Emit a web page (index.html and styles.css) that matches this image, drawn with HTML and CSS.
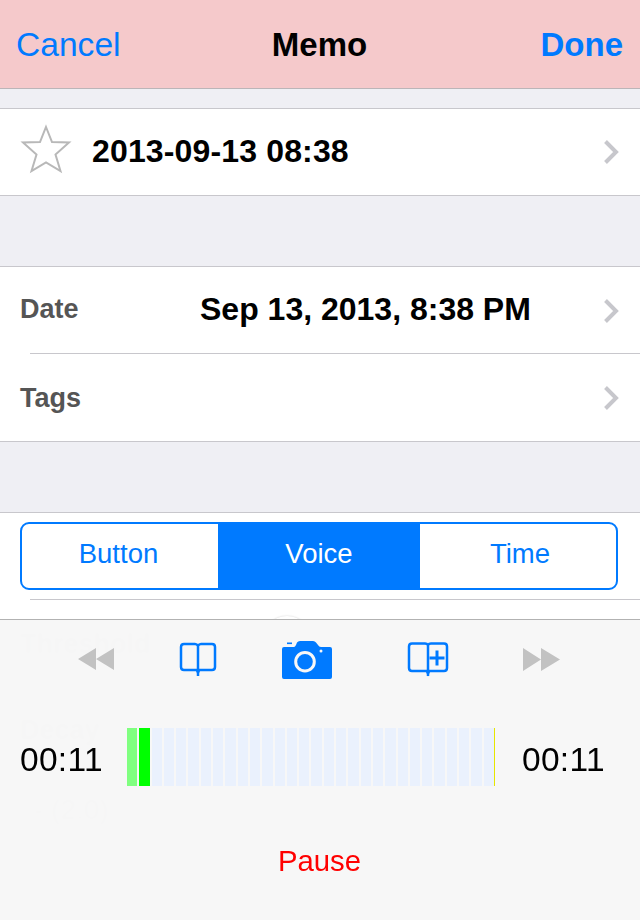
FILE: index.html
```html
<!DOCTYPE html>
<html lang="en">
<head>
  <meta charset="UTF-8">
  <title>Memo</title>
  <link rel="stylesheet" href="styles.css">
</head>
<body>
  <div class="screen">
    <header class="navbar">
      <span class="nav-btn nav-cancel">Cancel</span>
      <span class="nav-title">Memo</span>
      <span class="nav-btn nav-done">Done</span>
    </header>

    <section class="group group-first">
      <div class="row row-memo">
        <svg class="star" width="52" height="56" viewBox="0 0 52 56">
          <path d="M26 3 L32 18 L49 18.500 L35.500 30.500 L40.500 47 L26 38.500 L11.500 47 L16.500 30.500 L3 18.500 L20 18 Z" fill="none" stroke="#b8b8b8" stroke-width="2"/>
        </svg>
        <span class="memo-name">2013-09-13 08:38</span>
        <svg class="chevron" width="18" height="26" viewBox="0 0 18 26"><path d="M3.500 2.500 L14 13 L3.500 23.500" fill="none" stroke="#c7c7cc" stroke-width="4"/></svg>
      </div>
    </section>

    <section class="group">
      <div class="row row-field row-date">
        <span class="label">Date</span>
        <span class="value">Sep 13, 2013, 8:38 PM</span>
        <svg class="chevron" width="18" height="26" viewBox="0 0 18 26"><path d="M3.500 2.500 L14 13 L3.500 23.500" fill="none" stroke="#c7c7cc" stroke-width="4"/></svg>
      </div>
      <div class="row row-field row-inset">
        <span class="label">Tags</span>
        <span class="value"></span>
        <svg class="chevron" width="18" height="26" viewBox="0 0 18 26"><path d="M3.500 2.500 L14 13 L3.500 23.500" fill="none" stroke="#c7c7cc" stroke-width="4"/></svg>
      </div>
    </section>

    <section class="group group-last">
      <div class="row-segment">
        <div class="segments">
          <span class="seg seg-first">Button</span>
          <span class="seg seg-on">Voice</span>
          <span class="seg seg-last">Time</span>
        </div>
      </div>
      <div class="row-under">
        <div class="under-line"></div>
        <span class="under-knob"></span>
        <span class="under-label under-threshold">Threshold</span>
        <span class="under-label under-decay">Decay</span>
        <span class="under-value">- (2.0)</span>
      </div>
    </section>

    <div class="panel">
      <div class="tools">
        <svg width="38" height="24" viewBox="0 0 38 24"><path d="M19 0 V22 L1 11 Z M37 0 V22 L19 11 Z" fill="#c2c2c2"/></svg>
        <svg width="38" height="36" viewBox="0 0 38 36">
          <path d="M19 4 V34 M19 28 H5 Q2 28 2 25 V5 Q2 2 5 2 H16 Q18 2 19 4 Q20 2 22 2 H33 Q36 2 36 5 V25 Q36 28 33 28 H19" fill="none" stroke="#007aff" stroke-width="2.500"/>
          <path d="M16.500 28 H21.500 L19 33.500 Z" fill="#007aff"/>
        </svg>
        <svg width="52" height="40" viewBox="0 0 52 40">
          <path d="M1 9 Q1 7 3 7 H13 Q14 7 15 5 L16 2.500 Q17 1 19 1 H32 Q34 1 35 2.500 L37 5 Q38 7 40 7 H49 Q51 7 51 9 V37 Q51 39 49 39 H3 Q1 39 1 37 Z" fill="#007aff"/>
          <rect x="6" y="2.500" width="5" height="1.600" fill="#007aff"/>
          <circle cx="24" cy="21.700" r="9.300" fill="none" stroke="#f7f7f7" stroke-width="3"/>
          <circle cx="40" cy="11" r="1.500" fill="#f7f7f7"/>
        </svg>
        <svg class="tool-add" width="42" height="36" viewBox="0 0 42 36">
          <path d="M21 3 V34 M21 29 H5 Q2 29 2 26 V4.500 Q2 1.500 5 1.500 H18 Q20 1.500 21 3 Q22 1.500 24 1.500 H37 Q40 1.500 40 4.500 V26 Q40 29 37 29 H21" fill="none" stroke="#007aff" stroke-width="2.500"/>
          <path d="M18.500 29 H23.500 L21 34.500 Z" fill="#007aff"/>
          <path d="M30 8.500 V23.500 M22.500 16 H37.500" fill="none" stroke="#007aff" stroke-width="3"/>
        </svg>
        <svg class="tool-next" width="38" height="24" viewBox="0 0 38 24"><path d="M1 0 V23 L19 11.500 Z M19 0 V23 L38 11.500 Z" fill="#c2c2c2"/></svg>
      </div>

      <div class="meter-row">
        <span class="time time-left">00:11</span>
        <div class="meter">
          <i class="bar bar-peak"></i><i class="bar bar-level"></i>
          <i class="bar"></i><i class="bar"></i><i class="bar"></i><i class="bar"></i><i class="bar"></i>
          <i class="bar"></i><i class="bar"></i><i class="bar"></i><i class="bar"></i><i class="bar"></i>
          <i class="bar"></i><i class="bar"></i><i class="bar"></i><i class="bar"></i><i class="bar"></i>
          <i class="bar"></i><i class="bar"></i><i class="bar"></i><i class="bar"></i><i class="bar"></i>
          <i class="bar"></i><i class="bar"></i><i class="bar"></i><i class="bar"></i><i class="bar"></i>
          <i class="bar"></i><i class="bar"></i><i class="bar bar-end"></i>
        </div>
        <span class="time time-right">00:11</span>
      </div>

      <div class="pause">Pause</div>
    </div>
  </div>
</body>
</html>
```

FILE: styles.css
```css
* {
  box-sizing: border-box;
}

html, body {
  margin: 0;
  height: 100%;
}

body {
  font-family: "Liberation Sans", Arial, sans-serif;
  background-color: #efeff4;
  color: black;
  overflow: hidden;
}

.screen {
  position: relative;
  height: 920px;
  overflow: hidden;
}

/* Barra superior */
.navbar {
  height: 89px;
  padding: 2px 17px 0;
  display: flex;
  align-items: center;
  justify-content: space-between;
  background-color: #f5c9cb;
  border-bottom: 1px solid #bbb5b8;
}

.nav-btn {
  width: 120px;
  font-size: 33px;
  color: #007aff;
}

.nav-cancel {
  margin-left: -1px;
  font-size: 33.6px;
}

.nav-done {
  font-weight: bold;
  text-align: right;
}

.nav-title {
  font-size: 33px;
  font-weight: bold;
}

/* Grupos de filas */
.group {
  margin-top: 70px;
  background-color: white;
  border-top: 1px solid #c8c7cc;
  border-bottom: 1px solid #c8c7cc;
}

.group-first {
  margin-top: 19px;
}

.group-last {
  border-bottom: 0;
  height: 420px;
}

.row {
  display: flex;
  align-items: center;
}

.row-memo {
  height: 86px;
  padding: 0 20px;
}

.star {
  flex: none;
}

.memo-name {
  flex: 1;
  margin-left: 20px;
  padding-bottom: 2px;
  font-size: 32px;
  font-weight: bold;
  letter-spacing: 0.15px;
}

.row-field {
  position: relative;
  height: 87px;
  padding: 0 20px;
}

.row-date .label,
.row-date .value {
  padding-bottom: 2px;
}

.row-inset .label {
  padding-top: 2px;
}

.row-inset::before {
  content: "";
  position: absolute;
  top: -1px;
  left: 30px;
  right: 0;
  border-top: 1px solid #c8c7cc;
}

.label {
  width: 180px;
  font-size: 27px;
  font-weight: bold;
  color: #555555;
}

.value {
  flex: 1;
  font-size: 32px;
  font-weight: bold;
}

.chevron {
  flex: none;
}

/* Control segmentado */
.row-segment {
  padding: 9px 22px 0 20px;
}

.segments {
  display: flex;
  height: 68px;
  border: 2px solid #007aff;
  border-radius: 9px;
  overflow: hidden;
}

.seg {
  flex: 1;
  display: flex;
  align-items: center;
  justify-content: center;
  padding-bottom: 4px;
  font-size: 27.5px;
  color: #007aff;
}

.seg-first {
  flex: none;
  width: 196px;
  padding-right: 3px;
}

.seg-on {
  flex: none;
  width: 202px;
  background-color: #007aff;
  color: white;
}

.seg-last {
  padding-left: 4px;
}

/* Lo que queda debajo del panel */
.row-under {
  position: relative;
  padding-top: 9px;
}

.under-line {
  margin-left: 30px;
  border-top: 1px solid #c8c7cc;
}

.under-knob {
  position: absolute;
  left: 263px;
  top: 26px;
  width: 48px;
  height: 48px;
  border-radius: 50%;
  background-color: white;
  box-shadow: 0 0 2px rgba(0, 0, 0, 0.18);
}

.under-label {
  position: absolute;
  left: 20px;
  font-size: 27px;
  font-weight: bold;
  color: #bbbbbb;
}

.under-threshold {
  top: 39px;
}

.under-decay {
  top: 125px;
}

.under-value {
  position: absolute;
  left: 34px;
  top: 204px;
  font-size: 28px;
  color: #bbbbbb;
}

/* Panel translucido del grabador */
.panel {
  position: absolute;
  left: 0;
  right: 0;
  bottom: 0;
  height: 301px;
  background-color: rgba(247, 247, 247, 0.975);
  backdrop-filter: blur(1px);
  border-top: 1px solid #b2b2b2;
}

.tools {
  height: 79px;
  padding-left: 77px;
  display: flex;
  align-items: center;
  gap: 64px;
}

.tool-add {
  margin-left: 10px;
}

.tool-next {
  margin-left: 9px;
}

.meter-row {
  margin-top: 29px;
  padding-left: 20px;
  display: flex;
  align-items: center;
}

.time {
  padding-top: 6px;
  font-size: 33.500px;
  letter-spacing: 0.300px;
}

.time-left {
  width: 107px;
}

.time-right {
  margin-left: 27px;
}

.meter {
  width: 368px;
  height: 58px;
  display: flex;
  gap: 2px;
}

.bar {
  flex: 1;
  background-color: #eaf1fd;
}

.bar-peak {
  background-color: #80ff80;
}

.bar-level {
  background-color: #00ff00;
}

.bar-end {
  border-right: 1px solid #e6e600;
}

.pause {
  margin-top: 58px;
  padding-right: 1px;
  text-align: center;
  font-size: 29.300px;
  color: #ff0000;
}
```
